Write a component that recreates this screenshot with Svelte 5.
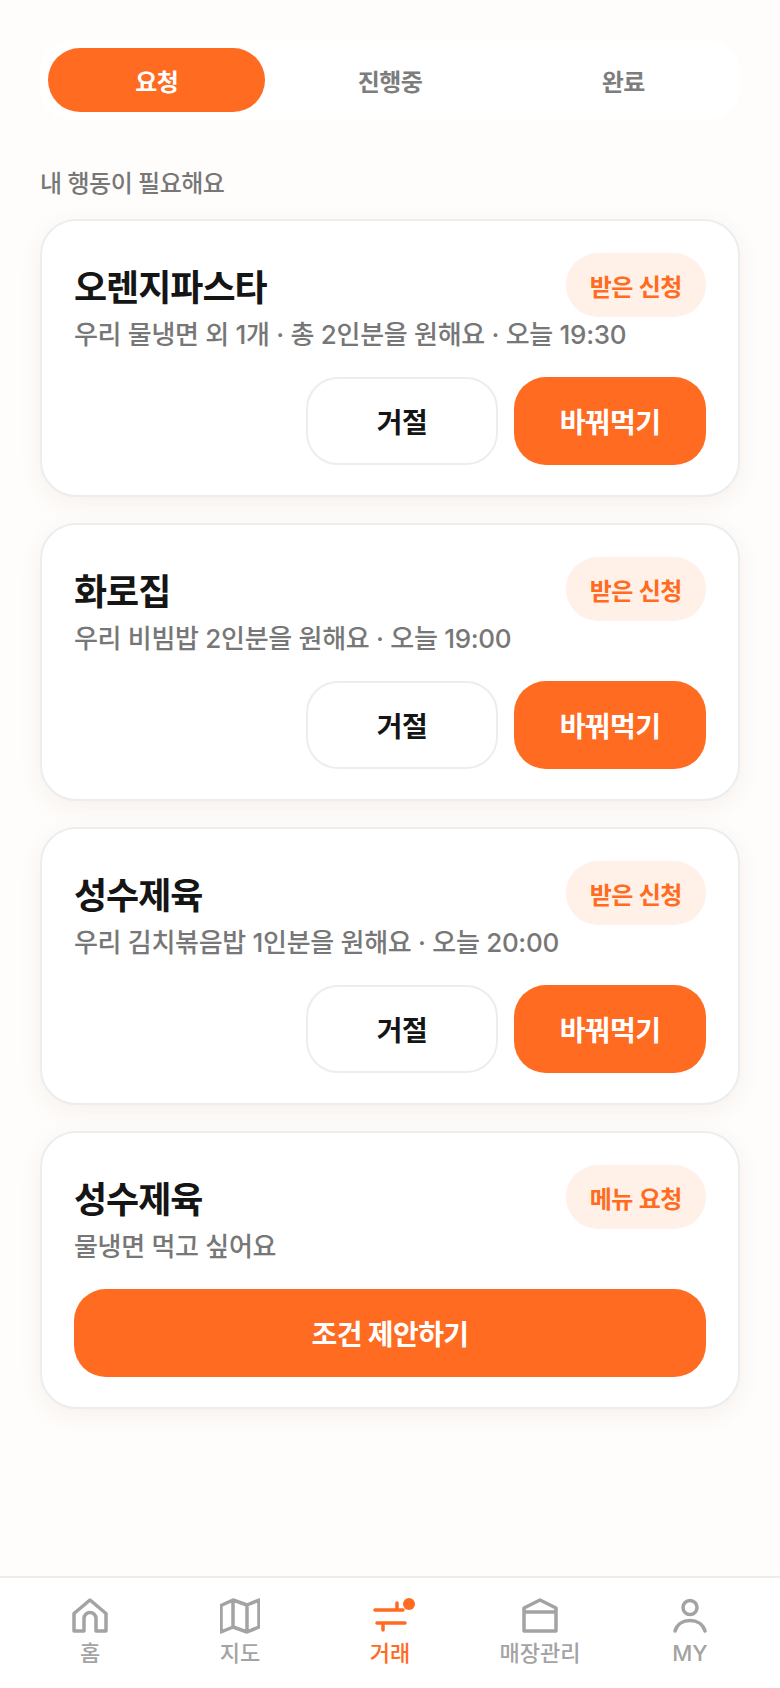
<script>
  const tabs = ["요청", "진행중", "완료"];
  const cards = [
    { name: "오렌지파스타", badge: "받은 신청", desc: "우리 물냉면 외 1개 · 총 2인분을 원해요 · 오늘 19:30" },
    { name: "화로집", badge: "받은 신청", desc: "우리 비빔밥 2인분을 원해요 · 오늘 19:00" },
    { name: "성수제육", badge: "받은 신청", desc: "우리 김치볶음밥 1인분을 원해요 · 오늘 20:00" },
    { name: "성수제육", badge: "메뉴 요청", desc: "물냉면 먹고 싶어요", request: true }
  ];
</script>

<main>
  <div class="tabs">
    {#each tabs as tab, i}
      <button class="tab" class:active={i === 0}>{tab}</button>
    {/each}
  </div>

  <h2>내 행동이 필요해요</h2>

  <div class="list">
    {#each cards as card}
      <section class="card">
        <div class="head">
          <h3>{card.name}</h3>
          <span class="badge">{card.badge}</span>
        </div>
        <p>{card.desc}</p>
        {#if card.request}
          <div class="actions">
            <button class="btn primary wide">조건 제안하기</button>
          </div>
        {:else}
          <div class="actions">
            <button class="btn">거절</button>
            <button class="btn primary">바꿔먹기</button>
          </div>
        {/if}
      </section>
    {/each}
  </div>

  <nav>
    <div class="item">
      <svg viewBox="0 0 36 36" width="36" height="36"><path d="M2 33V15.5L18 2l16 13.500V33H24V20.500a6 6 0 0 0-12 0V33Z" /></svg>
      <span>홈</span>
    </div>
    <div class="item">
      <svg viewBox="0 0 40 36" width="40" height="36"><path d="M1 7.500 13 2l14 5 12-5v27l-12 5-14-5-12 5ZM13 2v27M27 7v27" /></svg>
      <span>지도</span>
    </div>
    <div class="item on">
      <div class="trade">
        <svg viewBox="0 0 36 36" width="36" height="36"><path d="M3 12h28M25 5v7M33 25H5M11 32v-7" /></svg>
        <i class="dot"></i>
      </div>
      <span>거래</span>
    </div>
    <div class="item">
      <svg viewBox="0 0 36 36" width="36" height="36"><path d="M2 33V10L18 2l16 8v23ZM2 14h32" /></svg>
      <span>매장관리</span>
    </div>
    <div class="item">
      <svg viewBox="0 0 36 36" width="36" height="36"><circle cx="18" cy="9.500" r="7" /><path d="M3 33c2-7 8-10.500 15-10.500S31 26 33 33" /></svg>
      <span>MY</span>
    </div>
  </nav>
</main>

<style>
  :global(body) {
    background: #fffdfb;
  }

  main {
    width: 780px;
    height: 1688px;
    display: flex;
    flex-direction: column;
    font-family: Inter, "Noto Sans CJK KR", sans-serif;
    color: #151515;
  }

  .tabs {
    margin: 40px 40px 0;
    padding: 8px;
    height: 80px;
    box-sizing: border-box;
    display: flex;
    gap: 16px;
    background: #fff;
    border-radius: 32px;
  }

  .tab {
    flex: 1;
    border: 0;
    background: none;
    border-radius: 32px;
    font: inherit;
    font-size: 24px;
    font-weight: 700;
    letter-spacing: -0.6px;
    color: #7d7d7d;
  }

  .tab.active {
    background: #ff6b21;
    color: #fff;
  }

  h2 {
    margin: 46px 0 0 40px;
    font-size: 24px;
    line-height: 36px;
    font-weight: 500;
    letter-spacing: -0.5px;
    color: #777;
  }

  .list {
    margin: 17px 40px 0;
    display: flex;
    flex-direction: column;
    gap: 26px;
  }

  .card {
    height: 278px;
    box-sizing: border-box;
    padding: 32px;
    background: #fff;
    border: 2px solid #ededed;
    border-radius: 36px;
    box-shadow: 0 6px 24px rgba(60, 40, 20, 0.06);
  }

  .head {
    height: 64px;
    display: flex;
    align-items: center;
    justify-content: space-between;
  }

  h3 {
    margin: 0;
    font-size: 36px;
    font-weight: 700;
    letter-spacing: -1px;
    color: #151515;
  }

  .badge {
    height: 64px;
    padding: 0 24px;
    display: flex;
    align-items: center;
    background: #fff0e8;
    border-radius: 32px;
    font-size: 24px;
    font-weight: 600;
    letter-spacing: -0.4px;
    color: #ff6b21;
  }

  p {
    margin: 0;
    font-size: 26px;
    line-height: 36px;
    font-weight: 500;
    letter-spacing: -0.3px;
    color: #777;
  }

  .actions {
    margin-top: 24px;
    display: flex;
    justify-content: flex-end;
    gap: 16px;
  }

  .btn {
    width: 192px;
    height: 88px;
    box-sizing: border-box;
    border: 2px solid #ededed;
    border-radius: 32px;
    background: #fff;
    font: inherit;
    font-size: 28px;
    font-weight: 700;
    letter-spacing: -0.6px;
    color: #151515;
  }

  .primary {
    border: 0;
    background: #ff6b21;
    color: #fff;
  }

  .wide {
    width: 100%;
  }

  nav {
    margin-top: auto;
    height: 112px;
    box-sizing: border-box;
    padding: 0 15px;
    display: flex;
    background: #fff;
    border-top: 2px solid #ededed;
  }

  .item {
    flex: 1;
    padding-top: 20px;
    display: flex;
    flex-direction: column;
    align-items: center;
    gap: 4px;
    font-size: 22px;
    line-height: 30px;
    font-weight: 500;
    color: #a3a3a3;
  }

  svg {
    display: block;
    fill: none;
    stroke: #a3a3a3;
    stroke-width: 3.500;
    stroke-linejoin: round;
    stroke-linecap: round;
  }

  .on {
    color: #ff6b21;
  }

  .on svg {
    stroke: #ff6b21;
  }

  .trade {
    position: relative;
  }

  .dot {
    position: absolute;
    top: 0;
    right: -7px;
    width: 12px;
    height: 12px;
    border-radius: 50%;
    background: #ff6b21;
  }
</style>
